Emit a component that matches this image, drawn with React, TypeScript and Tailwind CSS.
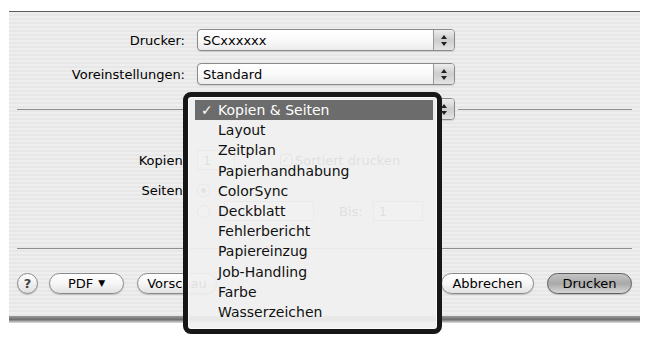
import React from "react";

const Arrows = () => (
  <div className="flex w-[21px] flex-col items-center justify-center gap-[3px] border-l border-[#9a9a9a] bg-gradient-to-b from-[#ededed] via-[#cdcdcd] to-[#e4e4e4]">
    <svg width="6" height="4" viewBox="0 0 6 4"><path d="M3 0 L6 4 L0 4 Z" fill="#222" /></svg>
    <svg width="6" height="4" viewBox="0 0 6 4"><path d="M0 0 L6 0 L3 4 Z" fill="#222" /></svg>
  </div>
);

const Popup = ({ text }: { text: string }) => (
  <div className="flex h-[22px] w-[258px] overflow-hidden rounded-[4px] border border-[#8a8a8a] bg-gradient-to-b from-white via-[#fafafa] to-[#ececec] shadow-[0_1px_1px_rgba(0,0,0,0.12)]">
    <div className="flex flex-1 items-center pl-[5px] text-[13px] leading-none text-black">{text}</div>
    <Arrows />
  </div>
);

const Pill = ({ children, w, def }: { children: React.ReactNode; w: string; def?: boolean }) => (
  <div
    className={
      "flex h-[21px] items-center justify-center rounded-full border text-[13px] leading-none text-black shadow-[0_1px_1px_rgba(0,0,0,0.18)] " +
      w +
      (def
        ? " border-[#5e5e5e] bg-gradient-to-b from-[#c4c4c4] via-[#a9a9a9] to-[#d6d6d6]"
        : " border-[#8a8a8a] bg-gradient-to-b from-white via-[#f6f6f6] to-[#e2e2e2]")
    }
  >
    {children}
  </div>
);

const items = [
  "Kopien & Seiten",
  "Layout",
  "Zeitplan",
  "Papierhandhabung",
  "ColorSync",
  "Deckblatt",
  "Fehlerbericht",
  "Papiereinzug",
  "Job-Handling",
  "Farbe",
  "Wasserzeichen",
];

export default function App() {
  return (
    <div className="relative h-[337px] w-[646px] overflow-hidden bg-white font-['DejaVu_Sans',sans-serif] text-[13px] text-black">
      <div className="ml-[9px] mt-[11px] flex w-[631px] flex-col">
        <div className="flex h-[305px] flex-col border-t border-[#5a5a5a] bg-[repeating-linear-gradient(180deg,#eeeeee_0px,#eeeeee_2px,#e7e7e7_2px,#e7e7e7_4px)] px-[8px]">
          {/* Drucker */}
          <div className="mt-[17px] flex h-[22px] items-center">
            <div className="w-[168px] text-right leading-none">Drucker:</div>
            <div className="ml-[12px]"><Popup text="SCxxxxxx" /></div>
          </div>
          {/* Voreinstellungen */}
          <div className="mt-[12px] flex h-[22px] items-center">
            <div className="w-[168px] text-right leading-none">Voreinstellungen:</div>
            <div className="ml-[12px]"><Popup text="Standard" /></div>
          </div>
          {/* group popup */}
          <div className="mt-[13px] flex h-[22px] items-center">
            <div className="h-px w-[172px] bg-[#8e8e8e]" />
            <div className="ml-[8px]"><Popup text="" /></div>
            <div className="ml-[3px] h-px flex-1 bg-[#8e8e8e]" />
          </div>
          {/* Kopien */}
          <div className="mt-[30px] flex h-[20px] items-center">
            <div className="w-[170px] text-right leading-none">Kopien:</div>
            <div className="ml-[10px] flex h-[20px] w-[38px] items-center border border-[#999] bg-white pl-[5px] leading-none">1</div>
            <div className="ml-[45px] flex h-[12px] w-[12px] items-center justify-center rounded-[2px] border border-[#777] bg-white text-[10px] leading-none">✓</div>
            <div className="ml-[3px] leading-none">Sortiert drucken</div>
          </div>
          {/* Seiten */}
          <div className="mt-[10px] flex h-[20px] items-center">
            <div className="w-[170px] text-right leading-none">Seiten:</div>
            <div className="ml-[10px] flex h-[13px] w-[13px] items-center justify-center rounded-full border border-[#777] bg-white">
              <div className="h-[5px] w-[5px] rounded-full bg-[#333]" />
            </div>
          </div>
          <div className="mt-[1px] flex h-[20px] items-center">
            <div className="w-[170px]" />
            <div className="ml-[10px] h-[13px] w-[13px] rounded-full border border-[#777] bg-white" />
            <div className="ml-[14px] h-[20px] w-[90px] border border-[#999] bg-white" />
            <div className="ml-[25px] leading-none">Bis:</div>
            <div className="ml-[10px] flex h-[20px] w-[50px] items-center border border-[#999] bg-white pl-[5px] leading-none">1</div>
          </div>
          {/* separator */}
          <div className="mt-[27px] h-px w-full bg-[#8e8e8e]" />
          {/* buttons */}
          <div className="mt-[23px] flex h-[22px] items-center">
            <div className="flex h-[21px] w-[21px] items-center justify-center rounded-full border border-[#8a8a8a] bg-gradient-to-b from-white to-[#e0e0e0] text-[13px] font-bold leading-none text-[#444] shadow-[0_1px_1px_rgba(0,0,0,0.18)]">?</div>
            <div className="ml-[11px]">
              <Pill w="w-[75px]">
                PDF<span className="ml-[5px] text-[9px]">▼</span>
              </Pill>
            </div>
            <div className="ml-[13px]"><Pill w="w-[80px]">Vorschau</Pill></div>
            <div className="flex-1" />
            <Pill w="w-[93px]">Abbrechen</Pill>
            <div className="ml-[13px]"><Pill w="w-[85px]" def>Drucken</Pill></div>
          </div>
        </div>
        <div className="h-[7px] bg-gradient-to-b from-[#9a9a9a] via-[#6f6f6f] to-[#e4e4e4]" />
      </div>

      {/* menu overlay */}
      <div className="absolute left-[183px] top-[92px] h-[242px] w-[259px] rounded-[8px] border-[5px] border-[#171717] bg-[rgba(240,240,240,0.93)] pl-[7px] pr-[4px] pt-[3px] shadow-[inset_0_0_0_1px_#fbfbfb]">
        {items.map((it, i) => (
          <div
            key={it}
            className={
              "flex h-[20.2px] items-center text-[14px] leading-none " +
              (i === 0 ? "bg-[#6c6c6c] text-white" : "text-[#111]")
            }
          >
            <div className="w-[23px] pl-[6px]">{i === 0 ? "✓" : ""}</div>
            <div>{it}</div>
          </div>
        ))}
      </div>
    </div>
  );
}
